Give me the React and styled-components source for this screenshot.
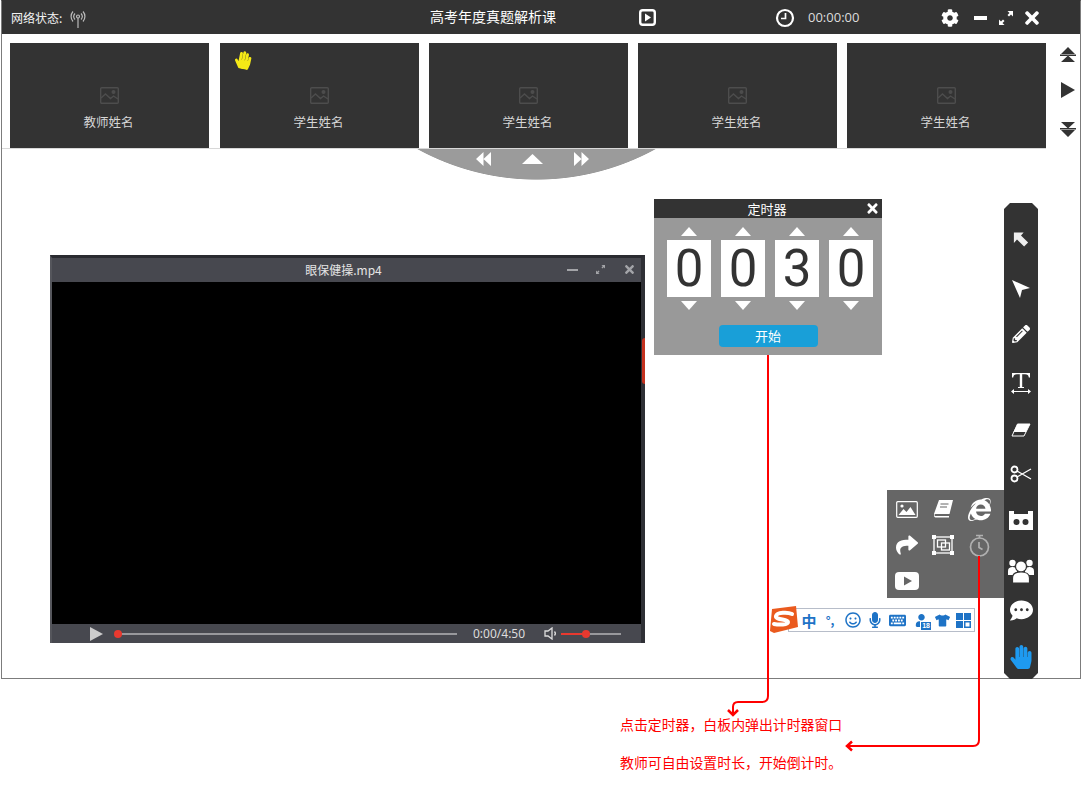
import React from 'react';
import styled, { createGlobalStyle } from 'styled-components';
import {
  FaCog, FaTimes, FaHandPaper, FaCommentDots, FaPencilAlt, FaInternetExplorer,
  FaShare, FaRegSmile, FaMicrophone, FaKeyboard, FaTshirt, FaUser,
} from 'react-icons/fa';

const Global = createGlobalStyle`
  html, body { margin: 0; padding: 0; background: #fff; }
  body { font-family: "Noto Sans CJK SC", "Liberation Sans", sans-serif; }
  * { box-sizing: border-box; }
`;

const Page = styled.div`
  position: relative;
  width: 1082px;
  height: 789px;
  overflow: hidden;
  padding: 0 1px 0 1px;
`;
const Stage = styled.div`
  position: relative;
  height: 679px;
  border: 1px solid #7c7c7c;
  border-top: 1px solid #333;
  background: #fff;
`;
const TopBar = styled.header`
  height: 33px;
  background: #333;
  color: #fff;
  display: grid;
  grid-template-columns: 419px 209px 136px 24px 142px 33px 25px 23px 30px;
  align-items: center;
  padding-left: 9px;
`;
const Status = styled.div`
  display: flex;
  align-items: center;
  gap: 8px;
  font-size: 12px;
  color: #f2f2f2;
`;
const SignalWrap = styled.span`
  display: flex;
  margin-top: 3px;
`;
const Title = styled.div`
  font-size: 14px;
  margin-top: -3px;
`;
const Clock = styled.div`
  font-size: 13px;
  color: #ddd;
  font-family: "Open Sans", sans-serif;
  margin-top: -2px;
  padding-left: 9px;
`;
const Cell = styled.div`
  display: flex;
  align-items: center;
  color: #fff;
`;
const Strip = styled.div`
  display: flex;
  gap: 10px;
  padding: 9px 0 0 8px;
  height: 115px;
  width: 1044px;
  border-bottom: 1px solid #d8d8d8;
`;
const Thumb = styled.div`
  position: relative;
  width: 199px;
  height: 105px;
  background: #333;
  color: #d6d6d6;
  font-size: 12.5px;
  display: flex;
  flex-direction: column;
  align-items: center;
  padding-top: 44px;
  gap: 8px;
  &:first-child { margin-right: 1px; }
`;
const ThumbName = styled.span`
  margin-left: -2px;
`;
const RaisedHand = styled.div`
  position: absolute;
  left: 14px;
  top: 8px;
  color: #f5e916;
  font-size: 18px;
  line-height: 0;
  transform: rotate(12deg);
`;
const SideArrows = styled.div`
  position: absolute;
  left: 1057px;
  top: 46px;
  width: 17px;
  display: flex;
  flex-direction: column;
  gap: 19px;
  align-items: center;
  color: #333;
  & > :last-child { margin-top: 4px; }
`;
const Cap = styled.div`
  position: absolute;
  left: 414px;
  top: 148px;
  width: 241px;
  height: 31px;
  background: radial-gradient(circle 248px at 50% -217px, #9b9b9b 99.7%, transparent 100%);
  display: flex;
  align-items: center;
  padding: 3px 0 14px 60px;
  gap: 31px;
`;
const Win = styled.section`
  position: absolute;
  left: 48px;
  top: 254px;
  width: 595px;
  height: 388px;
  background: #47484f;
  border-top: 3px solid #2a2b30;
  border-left: 2px solid #55565c;
  border-right: 4px solid #2f3036;
  display: flex;
  flex-direction: column;
`;
const RedEdge = styled.div`
  position: absolute;
  right: -4px;
  top: 80px;
  width: 3px;
  height: 46px;
  background: #c4321f;
  border-radius: 3px 0 0 3px;
`;
const WinBar = styled.div`
  position: relative;
  height: 24px;
  flex: none;
  color: #e4e4e4;
  font-size: 12px;
  text-align: center;
  line-height: 23px;
  padding-right: 6px;
`;
const WinTools = styled.div`
  position: absolute;
  right: 5px;
  top: 0;
  height: 23px;
  display: flex;
  align-items: center;
  gap: 18px;
  color: #a3a4a8;
`;
const Screen = styled.div`
  flex: 1;
  background: #000;
`;
const Controls = styled.div`
  height: 19px;
  flex: none;
  display: flex;
  align-items: center;
  padding-left: 38px;
  color: #ddd;
  font-size: 12px;
`;
const Track = styled.div`
  position: relative;
  height: 2px;
  width: ${p => p.$w}px;
  margin-left: ${p => p.$ml}px;
  background: #98989c;
  flex: none;
`;
const Fill = styled.div`
  height: 2px;
  background: #e8392f;
`;
const Knob = styled.div`
  position: absolute;
  top: -3px;
  width: 8px;
  height: 8px;
  border-radius: 50%;
  background: #e8392f;
`;
const Time = styled.span`
  margin: 0 18px 0 16px;
  width: 53px;
  white-space: nowrap;
  font-family: "Noto Sans", sans-serif;
`;
const Timer = styled.section`
  position: absolute;
  left: 652px;
  top: 198px;
  width: 228px;
  height: 156px;
  background: #999;
`;
const TimerHead = styled.div`
  position: relative;
  height: 19px;
  background: #333;
  color: #fff;
  font-size: 13px;
  line-height: 19px;
  text-align: center;
  padding-right: 2px;
`;
const TimerClose = styled.div`
  position: absolute;
  right: 2px;
  top: 2px;
  line-height: 0;
  color: #fff;
`;
const Digits = styled.div`
  display: flex;
  gap: 10px;
  padding: 9px 0 0 13px;
`;
const DigitCol = styled.div`
  display: flex;
  flex-direction: column;
  align-items: center;
  gap: 4px;
`;
const Digit = styled.div`
  width: 44px;
  height: 57px;
  background: #fff;
  color: #333;
  font-family: "Roboto", sans-serif;
  font-weight: 400;
  font-size: 51px;
  line-height: 57px;
  text-align: center;
`;
const StartRow = styled.div`
  display: flex;
  justify-content: center;
  padding: 15px 0 0 0;
`;
const Start = styled.button`
  width: 99px;
  height: 22px;
  border: 0;
  padding: 0 0 2px;
  border-radius: 4px;
  background: #199fd8;
  color: #fff;
  font: 13px "Noto Sans CJK SC", sans-serif;
`;
const Rail = styled.nav`
  position: absolute;
  left: 1002px;
  top: 202px;
  width: 34px;
  height: 476px;
  background: #333;
  clip-path: polygon(6px 0, 28px 0, 34px 6px, 34px 470px, 28px 476px, 6px 476px, 0 470px, 0 6px);
`;
const RailItem = styled.div`
  position: absolute;
  left: 0;
  width: 34px;
  top: ${p => p.$y}px;
  height: 0;
  display: flex;
  align-items: center;
  justify-content: center;
  color: ${p => p.$c || '#fff'};
`;
const Pop = styled.div`
  position: absolute;
  left: 885px;
  top: 489px;
  width: 117px;
  height: 108px;
  background: #666;
  display: grid;
  grid-template-columns: repeat(3, 36px);
  grid-auto-rows: 36px;
  padding: 1px 0 0 2px;
  color: #fff;
`;
const PopCell = styled.div`
  display: flex;
  align-items: center;
  justify-content: center;
  color: #fff;
`;
const Ime = styled.div`
  position: absolute;
  left: 786px;
  top: 607px;
  width: 187px;
  height: 24px;
  background: #fff;
  border: 1px solid #b7bdc9;
  display: grid;
  grid-template-columns: 20px 22px 24px 20px 24px 24px 18px 24px;
  align-items: center;
  padding-left: 10px;
  color: #1e73c6;
`;
const ImeCell = styled.div`
  position: relative;
  display: flex;
  align-items: center;
  justify-content: center;
  font-size: ${p => p.$s || 14}px;
  font-weight: 700;
  line-height: 1;
`;
const AgeBadge = styled.span`
  position: absolute;
  right: 1px;
  bottom: -4px;
  background: #1e73c6;
  color: #fff;
  font: 700 7px/8px "Liberation Sans", sans-serif;
  padding: 0 1px;
  border: 1px solid #fff;
`;
const ImeLogo = styled.div`
  position: absolute;
  left: 767px;
  top: 605px;
  line-height: 0;
`;
const Notes = styled.div`
  padding: 36px 0 0 619px;
  color: #f00;
  font-size: 13.9px;
  display: flex;
  flex-direction: column;
  gap: 19px;
  line-height: 19px;
`;
const Overlay = styled.svg`
  position: absolute;
  left: 0;
  top: 0;
  pointer-events: none;
`;

const Signal = () => (
  <svg width="16" height="18" viewBox="0 0 16 18" fill="none" stroke="#bbb" strokeWidth="1.2">
    <path d="M8 8v10" /><circle cx="8" cy="6.5" r="1.5" />
    <path d="M5 3.5a4.5 4.5 0 0 0 0 6M11 3.5a4.5 4.5 0 0 1 0 6M3 1.5a7.5 7.5 0 0 0 0 10M13 1.5a7.5 7.5 0 0 1 0 10" />
  </svg>
);
const PlayBox = () => (
  <svg width="17" height="17" viewBox="0 0 17 17">
    <rect x="1.2" y="1.2" width="14.6" height="14.6" rx="2.5" fill="none" stroke="#fff" strokeWidth="2.4" />
    <path d="M6 4.500l6 4-6 4z" fill="#fff" />
  </svg>
);
const ClockIcon = () => (
  <svg width="20" height="20" viewBox="0 0 20 20" fill="none" stroke="#fff">
    <circle cx="10" cy="10" r="8" strokeWidth="2.2" /><path d="M10.500 5v5.500H6" strokeWidth="1.7" />
  </svg>
);
const Minus = ({ w = 13, h = 4, c = '#fff' }) => (
  <svg width={w} height={h}><rect width={w} height={h} fill={c} /></svg>
);
const Expand = ({ s = 14, c = '#fff' }) => (
  <svg width={s} height={s} viewBox="0 0 14 14" fill={c}>
    <path d="M14 0v5.500l-2-2-2 2L8.500 4l2-2-2-2zM0 14V8.500l2 2 2-2L5.500 10l-2 2 2 2z" />
  </svg>
);
const Placeholder = () => (
  <svg width="19" height="17" viewBox="0 0 19 17" fill="none" stroke="#4d4d4d" strokeWidth="1.400">
    <rect x=".7" y=".7" width="17.600" height="15.600" rx="1" />
    <path d="M1 11l4.500-4 5 4.500 3-2.500 4.500 3" /><circle cx="13.500" cy="5" r="1.300" fill="#4d4d4d" />
  </svg>
);
const Tri = ({ up, w = 16, h = 9, c = '#fff' }) => (
  <svg width={w} height={h} viewBox="0 0 16 8" preserveAspectRatio="none">
    <path d={up ? 'M8 0l8 8H0z' : 'M0 0h16L8 8z'} fill={c} />
  </svg>
);
const DoubleH = ({ left }) => (
  <svg width="15" height="14" viewBox="0 0 15 14" fill="#fff">
    <path d={left ? 'M7.500 0v14L0 7zM15 0v14L7.500 7z' : 'M0 0v14l7.500-7zM7.500 0v14L15 7z'} />
  </svg>
);
const DoubleV = ({ up }) => (
  <svg width="16" height="16" viewBox="0 0 16 16" fill="#333">
    <path d={up ? 'M8 0l7 7H1zM1 15h14L8 8.500zM0 7.500h16V9H0z' : 'M8 16l7-7H1zM1 1h14L8 7.500zM0 7h16v1.500H0z'} />
  </svg>
);
const Users = () => (
  <svg width="26" height="26" viewBox="0 0 26 26" fill="#fff">
    <circle cx="4.500" cy="6" r="3.200" /><circle cx="21.500" cy="6" r="3.200" />
    <path d="M0 18v-4c0-3 2-4 4.500-4S9 11 9 14v4zM17 18v-4c0-3 2-4 4.500-4s4.500 1 4.500 4v4z" />
    <circle cx="13" cy="9.500" r="5.500" stroke="#333" strokeWidth="1.200" />
    <path d="M4.500 26v-5c0-4 3.500-6 8.500-6s8.500 2 8.500 6v5z" stroke="#333" strokeWidth="1.200" />
  </svg>
);

const rail = [
  { y: 36, el: <svg width="16" height="17" viewBox="0 0 18 18" fill="#eee"><path d="M1 1h11l-3 3.500 8 8-4.500 4.500-8-8L1 13z" /></svg> },
  { y: 86, el: <svg width="20" height="20" viewBox="0 0 20 20" fill="#fff"><path d="M1 1l18 8-8 2-2 8z" /></svg> },
  { y: 131, el: <FaPencilAlt size={18} /> },
  { y: 180, el: (
    <svg width="20" height="22" viewBox="0 0 20 22" fill="#fff">
      <path d="M1 1h18v4.500h-1.200C17.500 3 16.500 2.200 14 2.200h-2.800V15h1.800v1H7v-1h1.800V2.200H6C3.500 2.200 2.500 3 2.200 5.500H1z" />
      <path d="M0 19.500L3 17v2h14v-2l3 2.500-3 2.500v-2H3v2z" />
    </svg>) },
  { y: 227, el: <svg width="20" height="14" viewBox="0 0 20 14"><path d="M6.500 1H19l-6 12H1z" fill="none" stroke="#fff" strokeWidth="1" /><path d="M6.500 1H19l-4 8H2.500z" fill="#fff" /></svg> },
  { y: 271, el: (
    <svg width="22" height="18" viewBox="0 0 22 18" fill="none" stroke="#fff" strokeWidth="1.800">
      <circle cx="4.500" cy="4.500" r="3" /><circle cx="4.500" cy="13.500" r="3" />
      <path d="M7 6l14 8M7 12L21 4" strokeWidth="1.300" />
    </svg>) },
  { y: 317, el: (
    <svg width="24" height="19" viewBox="0 0 24 19">
      <path d="M0 0h5v3h14V0h5v19H0z" fill="#fff" /><circle cx="7.500" cy="11" r="3" fill="#333" /><circle cx="16.500" cy="11" r="3" fill="#333" />
    </svg>) },
  { y: 367, el: <Users /> },
  { y: 407, el: <FaCommentDots size={23} /> },
  { y: 454, el: <FaHandPaper size={24} />, c: '#1e9af0' },
];

const Grid = () => (
  <svg width="15" height="15" viewBox="0 0 15 15" fill="#1e73c6">
    <rect width="7" height="7" /><rect x="8" width="7" height="7" /><rect y="8" width="7" height="7" /><rect x="8" y="8" width="7" height="7" />
    <rect x="9.500" y="9.500" width="4" height="4" fill="#fff" />
  </svg>
);

export default function App() {
  return (
    <Page>
      <Global />
      <Stage>
        <TopBar>
          <Status>网络状态: <SignalWrap><Signal /></SignalWrap></Status>
          <Title>高考年度真题解析课</Title>
          <Cell><PlayBox /></Cell>
          <Cell><ClockIcon /></Cell>
          <Clock>00:00:00</Clock>
          <Cell><FaCog size={18} /></Cell>
          <Cell><Minus /></Cell>
          <Cell><Expand /></Cell>
          <Cell><FaTimes size={20} /></Cell>
        </TopBar>
        <Strip>
          <Thumb><Placeholder /><ThumbName>教师姓名</ThumbName></Thumb>
          <Thumb><RaisedHand><FaHandPaper /></RaisedHand><Placeholder /><ThumbName>学生姓名</ThumbName></Thumb>
          <Thumb><Placeholder /><ThumbName>学生姓名</ThumbName></Thumb>
          <Thumb><Placeholder /><ThumbName>学生姓名</ThumbName></Thumb>
          <Thumb><Placeholder /><ThumbName>学生姓名</ThumbName></Thumb>
        </Strip>
        <SideArrows>
          <DoubleV up />
          <svg width="14" height="16" viewBox="0 0 14 16" fill="#333"><path d="M0 0l14 8-14 8z" /></svg>
          <DoubleV />
        </SideArrows>
        <Cap>
          <DoubleH left />
          <Tri up w={21} h={10} />
          <DoubleH />
        </Cap>

        <Win>
          <RedEdge />
          <WinBar>
            眼保健操.mp4
            <WinTools>
              <Minus w={11} h={2} c="#a3a4a8" />
              <Expand s={9} c="#a3a4a8" />
              <FaTimes size={13} />
            </WinTools>
          </WinBar>
          <Screen />
          <Controls>
            <svg width="13" height="14" viewBox="0 0 13 14" fill="#ccc"><path d="M0 0l13 7-13 7z" /></svg>
            <Track $w={342} $ml={12}><Knob style={{ left: -1 }} /></Track>
            <Time>0:00/4:50</Time>
            <svg width="14" height="13" viewBox="0 0 14 13" fill="none" stroke="#ddd" strokeWidth="1.300">
              <path d="M1 4h3l4-3v11L4 9H1z" /><path d="M10.500 4.500a3 3 0 0 1 0 4" />
            </svg>
            <Track $w={60} $ml={3}>
              <Fill style={{ width: 25 }} /><Knob style={{ left: 21 }} />
            </Track>
          </Controls>
        </Win>

        <Timer>
          <TimerHead>定时器<TimerClose><FaTimes size={15} /></TimerClose></TimerHead>
          <Digits>
            {['0', '0', '3', '0'].map((d, i) => (
              <DigitCol key={i}>
                <Tri up />
                <Digit>{d}</Digit>
                <Tri />
              </DigitCol>
            ))}
          </Digits>
          <StartRow><Start>开始</Start></StartRow>
        </Timer>

        <Rail>
          {rail.map((r, i) => <RailItem key={i} $y={r.y} $c={r.c}>{r.el}</RailItem>)}
        </Rail>

        <Pop>
          <PopCell>
            <svg width="22" height="17" viewBox="0 0 22 17">
              <rect x=".7" y=".7" width="20.600" height="15.600" rx="1" fill="none" stroke="#fff" strokeWidth="1.200" />
              <path d="M2.500 14l5-6 3 3 4-5 5 8z" fill="#fff" /><circle cx="6" cy="5" r="1.600" fill="#fff" />
            </svg>
          </PopCell>
          <PopCell>
            <svg width="19" height="18" viewBox="0 0 19 18">
              <path d="M5 0h14l-3.500 14H2C.5 14 0 15 1 16h14v1.500H1.500C0 17.500-.5 15 .3 13z" fill="#fff" />
              <path d="M6.500 4h8M6 7h7" stroke="#666" strokeWidth="1" />
            </svg>
          </PopCell>
          <PopCell><FaInternetExplorer size={23} /></PopCell>
          <PopCell><FaShare size={22} /></PopCell>
          <PopCell>
            <svg width="22" height="20" viewBox="0 0 22 20" fill="none" stroke="#fff" strokeWidth="1.300">
              <rect x="2" y="2" width="18" height="16" />
              <rect x="5.500" y="5" width="8" height="7" /><rect x="9.500" y="8" width="8" height="7" />
              <g fill="#fff" stroke="none"><rect width="4" height="4" /><rect x="18" width="4" height="4" /><rect y="16" width="4" height="4" /><rect x="18" y="16" width="4" height="4" /></g>
            </svg>
          </PopCell>
          <PopCell>
            <svg width="21" height="23" viewBox="0 0 21 23" fill="none" stroke="#b0b0b0" strokeWidth="1.700">
              <circle cx="10.500" cy="13" r="9" /><path d="M7 1.500h7M10.500 1.500V4M10 8v5.500l3.500 2" />
            </svg>
          </PopCell>
          <PopCell>
            <svg width="24" height="18" viewBox="0 0 24 18">
              <rect width="24" height="18" rx="4" fill="#fff" /><path d="M9 4.500l8 4.500-8 4.500z" fill="#666" />
            </svg>
          </PopCell>
        </Pop>

        <Ime>
          <ImeCell $s={15}>中</ImeCell>
          <ImeCell $s={12}>°,</ImeCell>
          <ImeCell><FaRegSmile size={16} /></ImeCell>
          <ImeCell><FaMicrophone size={16} /></ImeCell>
          <ImeCell><FaKeyboard size={17} /></ImeCell>
          <ImeCell><FaUser size={13} /><AgeBadge>18</AgeBadge></ImeCell>
          <ImeCell><FaTshirt size={15} /></ImeCell>
          <ImeCell><Grid /></ImeCell>
        </Ime>
        <ImeLogo>
          <svg width="29" height="28" viewBox="0 0 29 28">
            <path d="M3 3l24-3 2 21-24 6-4-2z" fill="#ea5a1e" />
            <path d="M23 8c-4-2-15-2-16 2s12 3 12 6-9 3-14 2" fill="none" stroke="#fff" strokeWidth="4" strokeLinecap="round" />
          </svg>
        </ImeLogo>
      </Stage>
      <Notes>
        <div>点击定时器，白板内弹出计时器窗口</div>
        <div>教师可自由设置时长，开始倒计时。</div>
      </Notes>
      <Overlay width="1082" height="789" fill="none" stroke="#f00" strokeWidth="2">
        <path d="M768 355v341q0 6-6 6h-24q-5 0-5 5v8" />
        <path d="M728 710l5 5 5-5" strokeWidth="2.500" />
        <path d="M979 556v184q0 6-6 6H847" />
        <path d="M852 741.500l-5 4.500 5 4.500" strokeWidth="2.500" />
      </Overlay>
    </Page>
  );
}
